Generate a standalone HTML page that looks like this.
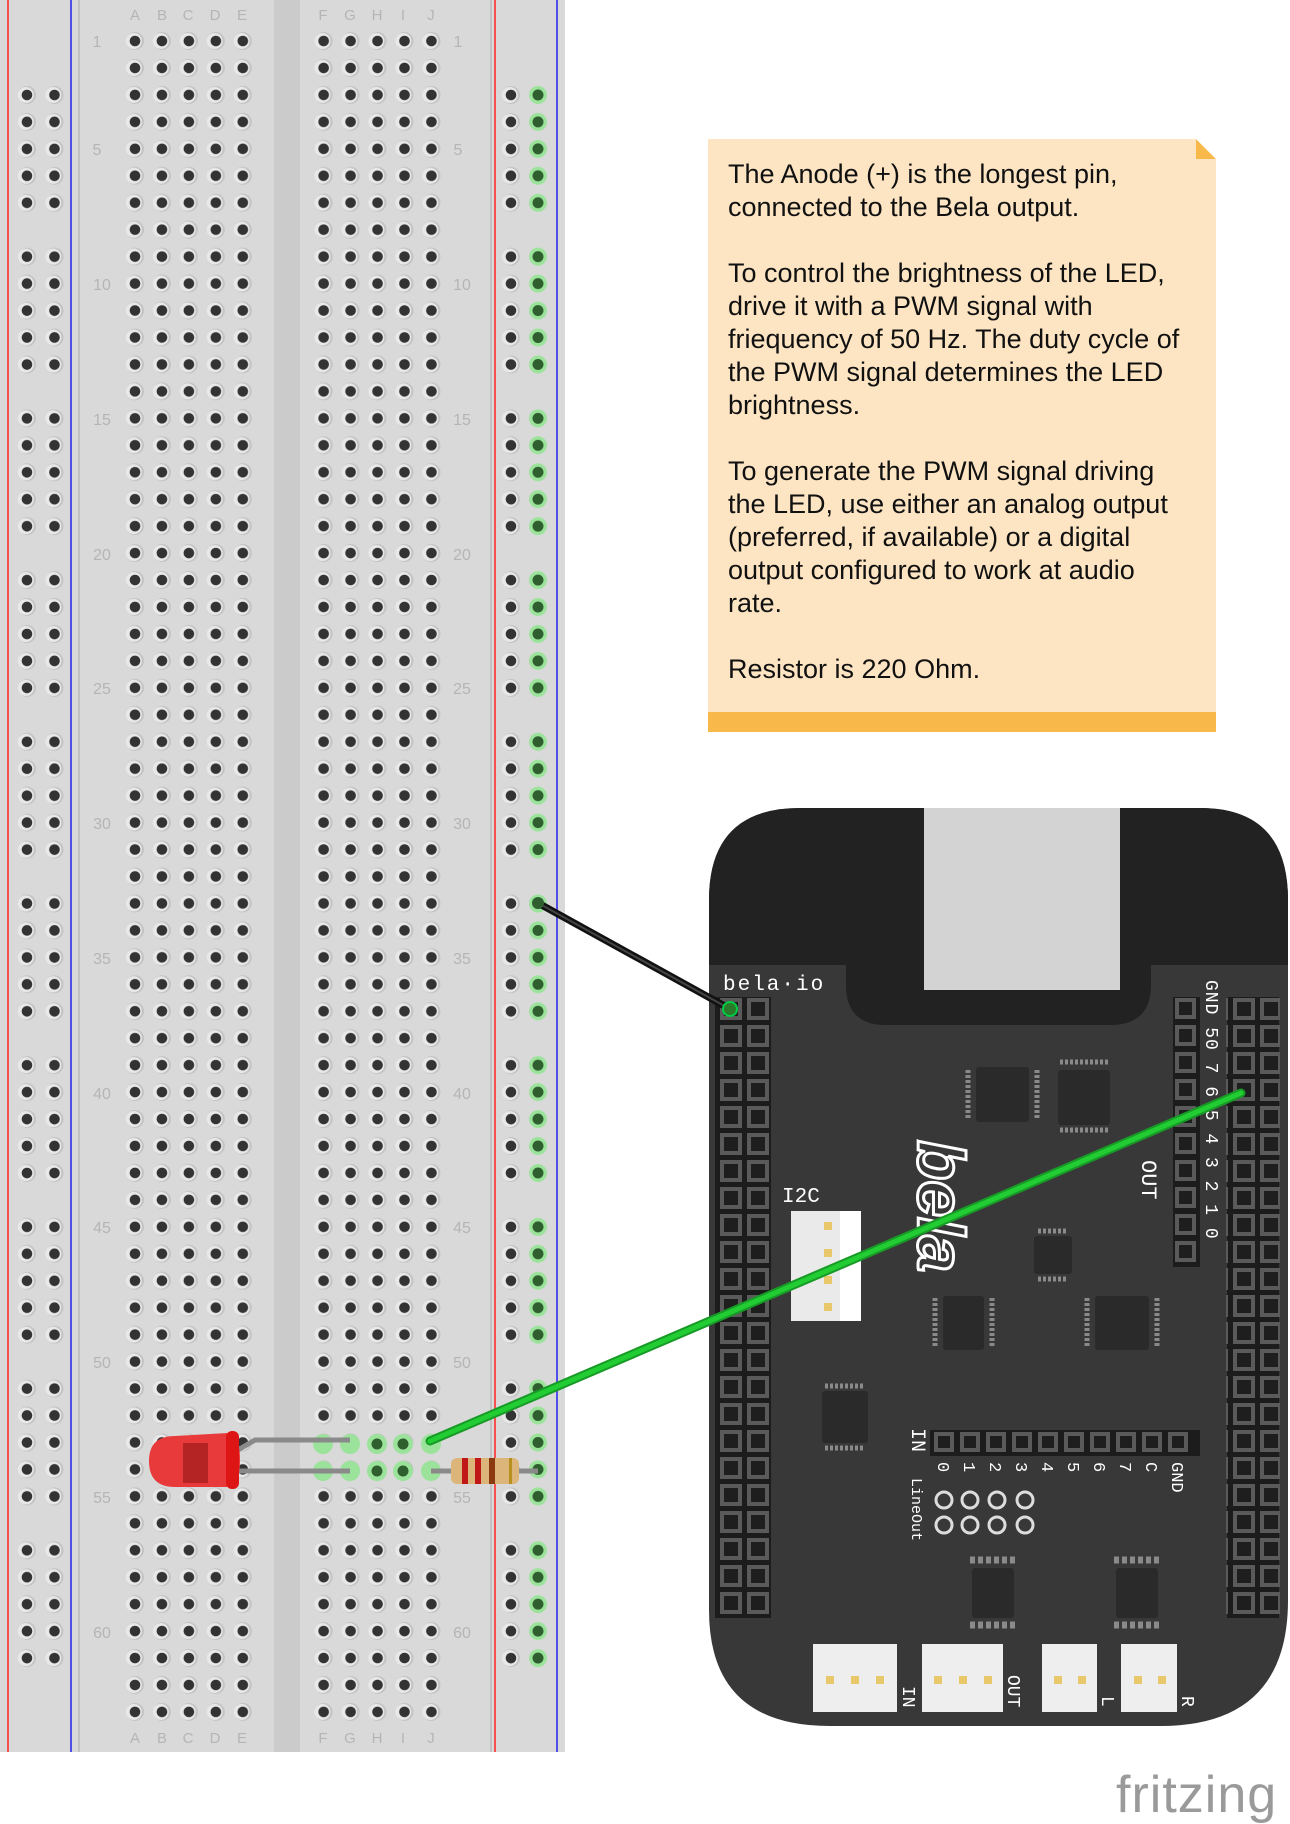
<!DOCTYPE html>
<html><head><meta charset="utf-8"><style>
html,body{margin:0;padding:0;background:#fff;}
body{width:1290px;height:1824px;position:relative;overflow:hidden;font-family:"Liberation Sans",sans-serif;}
svg{position:absolute;left:0;top:0}
.note{position:absolute;left:728px;top:158px;font-size:27px;line-height:33px;color:#111;}
</style></head><body>
<svg width="1290" height="1824" viewBox="0 0 1290 1824" xmlns="http://www.w3.org/2000/svg">
<defs>
<pattern id="h" x="121.525" y="27.525" width="26.95" height="26.95" patternUnits="userSpaceOnUse">
<circle cx="13.475" cy="13.475" r="9" fill="#c4c4c4"/><circle cx="12.3" cy="13.475" r="8" fill="#e8e8e8"/><circle cx="13.475" cy="13.475" r="5.3" fill="#333"/>
</pattern>
<g id="five">
<g fill="#c4c4c4"><circle cx="13.5" cy="13.475" r="9"/><circle cx="13.5" cy="40.4" r="9"/><circle cx="13.5" cy="67.4" r="9"/><circle cx="13.5" cy="94.3" r="9"/><circle cx="13.5" cy="121.3" r="9"/></g>
<g fill="#e8e8e8"><circle cx="12.3" cy="13.475" r="8"/><circle cx="12.3" cy="40.4" r="8"/><circle cx="12.3" cy="67.4" r="8"/><circle cx="12.3" cy="94.3" r="8"/><circle cx="12.3" cy="121.3" r="8"/></g>
<g fill="#333"><circle cx="13.5" cy="13.475" r="5.3"/><circle cx="13.5" cy="40.4" r="5.3"/><circle cx="13.5" cy="67.4" r="5.3"/><circle cx="13.5" cy="94.3" r="5.3"/><circle cx="13.5" cy="121.3" r="5.3"/></g>
</g>
<pattern id="r" x="13.5" y="81.5" width="27.5" height="161.7" patternUnits="userSpaceOnUse"><use href="#five"/></pattern>
<pattern id="r2" x="497.5" y="81.5" width="27.5" height="161.7" patternUnits="userSpaceOnUse"><use href="#five"/></pattern>
<pattern id="g" x="524.5" y="81.5" width="27.5" height="161.7" patternUnits="userSpaceOnUse">
<g fill="#9be39b"><circle cx="13.5" cy="13.475" r="9"/><circle cx="13.5" cy="40.4" r="9"/><circle cx="13.5" cy="67.4" r="9"/><circle cx="13.5" cy="94.3" r="9"/><circle cx="13.5" cy="121.3" r="9"/></g>
<g fill="#2f5f2f"><circle cx="13.5" cy="13.475" r="5.5"/><circle cx="13.5" cy="40.4" r="5.5"/><circle cx="13.5" cy="67.4" r="5.5"/><circle cx="13.5" cy="94.3" r="5.5"/><circle cx="13.5" cy="121.3" r="5.5"/></g>
</pattern>
<pattern id="hp" x="718" y="996" width="27" height="27" patternUnits="userSpaceOnUse">
<rect x="2" y="2" width="22" height="22" fill="#5a5a5a"/><rect x="6" y="6" width="14" height="14" fill="#1e1e1e"/>
</pattern>
</defs>
<rect x="0" y="0" width="565" height="1752" fill="#d9d9d9"/>
<rect x="274" y="0" width="26" height="1752" fill="#cbcbcb"/>
<line x1="79" y1="0" x2="79" y2="1752" stroke="#bbb" stroke-width="1.5"/>
<line x1="491" y1="0" x2="491" y2="1752" stroke="#bbb" stroke-width="1.5"/>
<line x1="8" y1="0" x2="8" y2="1752" stroke="#f22" stroke-width="1.5"/>
<line x1="71" y1="0" x2="71" y2="1752" stroke="#22e" stroke-width="1.5"/>
<line x1="495" y1="0" x2="495" y2="1752" stroke="#f22" stroke-width="1.5"/>
<line x1="557" y1="0" x2="557" y2="1752" stroke="#22e" stroke-width="1.5"/>
<rect x="121.5" y="27.5" width="134.75" height="1698" fill="url(#h)"/>
<rect x="309.5" y="27.5" width="134.75" height="1698" fill="url(#h)"/>
<rect x="13.5" y="81.5" width="55" height="1617" fill="url(#r)"/>
<rect x="497.5" y="81.5" width="27.5" height="1617" fill="url(#r2)"/>
<rect x="524.5" y="81.5" width="27.5" height="1617" fill="url(#g)"/>
<g fill="#9be39b"><circle cx="323" cy="1444" r="10"/><circle cx="350" cy="1444" r="10"/><circle cx="377" cy="1444" r="10"/><circle cx="403" cy="1444" r="10"/><circle cx="431" cy="1444" r="10"/>
<circle cx="323" cy="1471" r="10"/><circle cx="350" cy="1471" r="10"/><circle cx="377" cy="1471" r="10"/><circle cx="403" cy="1471" r="10"/><circle cx="431" cy="1471" r="10"/></g>
<g fill="#2f5f2f"><circle cx="377" cy="1444" r="5.5"/><circle cx="403" cy="1444" r="5.5"/><circle cx="377" cy="1471" r="5.5"/><circle cx="403" cy="1471" r="5.5"/></g>
<g font-family="Liberation Sans" font-size="15" fill="#b5b5b5" text-anchor="middle">
<text x="135" y="20">A</text><text x="162" y="20">B</text><text x="188" y="20">C</text><text x="215" y="20">D</text><text x="242" y="20">E</text>
<text x="323" y="20">F</text><text x="350" y="20">G</text><text x="377" y="20">H</text><text x="403" y="20">I</text><text x="431" y="20">J</text>
<text x="135" y="1743">A</text><text x="162" y="1743">B</text><text x="188" y="1743">C</text><text x="215" y="1743">D</text><text x="242" y="1743">E</text>
<text x="323" y="1743">F</text><text x="350" y="1743">G</text><text x="377" y="1743">H</text><text x="403" y="1743">I</text><text x="431" y="1743">J</text>
</g>
<g font-family="Liberation Sans" font-size="16" fill="#b5b5b5" text-anchor="middle">
<text x="97" y="47">1</text><text x="97" y="155">5</text><text x="102" y="290">10</text><text x="102" y="425">15</text><text x="102" y="560">20</text><text x="102" y="694">25</text><text x="102" y="829">30</text><text x="102" y="964">35</text><text x="102" y="1099">40</text><text x="102" y="1233">45</text><text x="102" y="1368">50</text><text x="102" y="1503">55</text><text x="102" y="1638">60</text>
<text x="458" y="47">1</text><text x="458" y="155">5</text><text x="462" y="290">10</text><text x="462" y="425">15</text><text x="462" y="560">20</text><text x="462" y="694">25</text><text x="462" y="829">30</text><text x="462" y="964">35</text><text x="462" y="1099">40</text><text x="462" y="1233">45</text><text x="462" y="1368">50</text><text x="462" y="1503">55</text><text x="462" y="1638">60</text>
</g>
<rect x="708" y="139" width="508" height="593" fill="#fde5c3"/>
<rect x="708" y="712" width="508" height="20" fill="#f8b84a"/>
<polygon points="1196,139 1216,159 1196,159" fill="#f8b84a"/>
<polygon points="1196,139 1216,139 1216,159" fill="#fff"/>
<path d="M709,900 Q709,808 800,808 L1200,808 Q1288,808 1288,900 L1288,1600 Q1288,1726 1160,1726 L830,1726 Q709,1726 709,1610 Z" fill="#383838"/>
<path d="M709,900 Q709,808 800,808 L1200,808 Q1288,808 1288,900 L1288,965 L1151,965 L1151,985 Q1151,1025 1110,1025 L886,1025 Q846,1025 846,985 L846,965 L709,965 Z" fill="#222"/>
<rect x="924" y="808" width="196" height="182" fill="#d3d3d3"/>
<text x="723" y="990" font-family="Liberation Mono" font-size="21" fill="#fff" letter-spacing="2">bela·io</text>
<rect x="715" y="997" width="56" height="621" fill="#1c1c1c"/>
<rect x="718" y="996" width="54" height="621" fill="url(#hp)"/>
<rect x="1227" y="997" width="52" height="621" fill="#1c1c1c"/>
<rect x="1226" y="996" width="54" height="621" fill="url(#hp)"/>
<rect x="1173" y="997" width="27" height="270" fill="#1c1c1c"/>
<g fill="#5a5a5a"><rect x="1175" y="998" width="21" height="21"/><rect x="1175" y="1025" width="21" height="21"/><rect x="1175" y="1052" width="21" height="21"/><rect x="1175" y="1079" width="21" height="21"/><rect x="1175" y="1106" width="21" height="21"/><rect x="1175" y="1133" width="21" height="21"/><rect x="1175" y="1160" width="21" height="21"/><rect x="1175" y="1187" width="21" height="21"/><rect x="1175" y="1214" width="21" height="21"/><rect x="1175" y="1241" width="21" height="21"/></g>
<g fill="#1e1e1e"><rect x="1179" y="1002" width="13" height="13"/><rect x="1179" y="1029" width="13" height="13"/><rect x="1179" y="1056" width="13" height="13"/><rect x="1179" y="1083" width="13" height="13"/><rect x="1179" y="1110" width="13" height="13"/><rect x="1179" y="1137" width="13" height="13"/><rect x="1179" y="1164" width="13" height="13"/><rect x="1179" y="1191" width="13" height="13"/><rect x="1179" y="1218" width="13" height="13"/><rect x="1179" y="1245" width="13" height="13"/></g>
<text transform="translate(1206,980) rotate(90)" font-family="Liberation Mono" font-size="18" fill="#fff" letter-spacing="1">GND 50 7 6 5 4 3 2 1 0</text>
<text transform="translate(1142,1160) rotate(90)" font-family="Liberation Mono" font-size="22" fill="#fff">OUT</text>
<text x="782" y="1202" font-family="Liberation Mono" font-size="21" fill="#fff">I2C</text>
<rect x="791" y="1211" width="70" height="110" fill="#eaeaea"/><rect x="840" y="1211" width="21" height="110" fill="#fff"/>
<g fill="#e8c86a"><rect x="824" y="1222" width="8" height="8"/><rect x="824" y="1249" width="8" height="8"/><rect x="824" y="1276" width="8" height="8"/><rect x="824" y="1303" width="8" height="8"/></g>
<text transform="translate(918,1140) rotate(90)" font-family="Liberation Sans" font-weight="bold" font-style="italic" font-size="66" fill="none" stroke="#fff" stroke-width="3">bela</text>
<g fill="#2a2a2a">
<rect x="976" y="1067" width="53" height="55" rx="3"/><rect x="1058" y="1070" width="52" height="55" rx="3"/>
<rect x="1034" y="1236" width="38" height="38" rx="3"/><rect x="943" y="1296" width="41" height="54" rx="3"/><rect x="1095" y="1296" width="54" height="54" rx="3"/>
<rect x="822" y="1391" width="46" height="52" rx="3"/><rect x="972" y="1568" width="42" height="50" rx="3"/><rect x="1116" y="1568" width="42" height="50" rx="3"/>
</g>
<g stroke="#8a8a8a" stroke-width="5" stroke-dasharray="3 2">
<line x1="968" y1="1070" x2="968" y2="1120"/><line x1="1037" y1="1070" x2="1037" y2="1120"/>
<line x1="1060" y1="1062" x2="1108" y2="1062"/><line x1="1060" y1="1130" x2="1108" y2="1130"/>
<line x1="935" y1="1298" x2="935" y2="1348"/><line x1="992" y1="1298" x2="992" y2="1348"/>
<line x1="1087" y1="1298" x2="1087" y2="1348"/><line x1="1157" y1="1298" x2="1157" y2="1348"/>
<line x1="825" y1="1386" x2="865" y2="1386"/><line x1="825" y1="1448" x2="865" y2="1448"/>
<line x1="1038" y1="1231" x2="1068" y2="1231"/><line x1="1038" y1="1279" x2="1068" y2="1279"/>
</g>
<g stroke="#8a8a8a" stroke-width="7" stroke-dasharray="5 3"><line x1="970" y1="1560" x2="1016" y2="1560"/><line x1="970" y1="1625" x2="1016" y2="1625"/><line x1="1114" y1="1560" x2="1160" y2="1560"/><line x1="1114" y1="1625" x2="1160" y2="1625"/></g>
<rect x="930" y="1430" width="270" height="26" fill="#1c1c1c"/>
<g fill="#5a5a5a"><rect x="934" y="1432" width="20" height="20"/><rect x="960" y="1432" width="20" height="20"/><rect x="986" y="1432" width="20" height="20"/><rect x="1012" y="1432" width="20" height="20"/><rect x="1038" y="1432" width="20" height="20"/><rect x="1064" y="1432" width="20" height="20"/><rect x="1090" y="1432" width="20" height="20"/><rect x="1116" y="1432" width="20" height="20"/><rect x="1142" y="1432" width="20" height="20"/><rect x="1168" y="1432" width="20" height="20"/></g>
<g fill="#1e1e1e"><rect x="938" y="1436" width="12" height="12"/><rect x="964" y="1436" width="12" height="12"/><rect x="990" y="1436" width="12" height="12"/><rect x="1016" y="1436" width="12" height="12"/><rect x="1042" y="1436" width="12" height="12"/><rect x="1068" y="1436" width="12" height="12"/><rect x="1094" y="1436" width="12" height="12"/><rect x="1120" y="1436" width="12" height="12"/><rect x="1146" y="1436" width="12" height="12"/><rect x="1172" y="1436" width="12" height="12"/></g>
<text transform="translate(912,1428) rotate(90)" font-family="Liberation Mono" font-size="20" fill="#fff">IN</text>
<g font-family="Liberation Mono" font-size="17" fill="#fff">
<text transform="translate(938,1462) rotate(90)">0</text><text transform="translate(964,1462) rotate(90)">1</text><text transform="translate(990,1462) rotate(90)">2</text><text transform="translate(1016,1462) rotate(90)">3</text>
<text transform="translate(1042,1462) rotate(90)">4</text><text transform="translate(1068,1462) rotate(90)">5</text><text transform="translate(1094,1462) rotate(90)">6</text><text transform="translate(1120,1462) rotate(90)">7</text><text transform="translate(1146,1462) rotate(90)">C</text><text transform="translate(1172,1462) rotate(90)">GND</text>
</g>
<text transform="translate(912,1478) rotate(90)" font-family="Liberation Mono" font-size="15" fill="#fff">LineOut</text>
<g fill="none" stroke="#ddd" stroke-width="3"><circle cx="944" cy="1500" r="8"/><circle cx="970" cy="1500" r="8"/><circle cx="997" cy="1500" r="8"/><circle cx="1025" cy="1500" r="8"/><circle cx="944" cy="1525" r="8"/><circle cx="970" cy="1525" r="8"/><circle cx="997" cy="1525" r="8"/><circle cx="1025" cy="1525" r="8"/></g>
<g fill="#eee"><rect x="813" y="1644" width="84" height="68"/><rect x="922" y="1644" width="81" height="68"/><rect x="1042" y="1644" width="55" height="68"/><rect x="1121" y="1644" width="56" height="68"/></g>
<g fill="#e8c86a"><rect x="826" y="1676" width="8" height="8"/><rect x="851" y="1676" width="8" height="8"/><rect x="876" y="1676" width="8" height="8"/><rect x="934" y="1676" width="8" height="8"/><rect x="959" y="1676" width="8" height="8"/><rect x="984" y="1676" width="8" height="8"/><rect x="1054" y="1676" width="8" height="8"/><rect x="1078" y="1676" width="8" height="8"/><rect x="1134" y="1676" width="8" height="8"/><rect x="1158" y="1676" width="8" height="8"/></g>
<g font-family="Liberation Mono" font-size="18" fill="#fff"><text transform="translate(903,1686) rotate(90)">IN</text><text transform="translate(1008,1675) rotate(90)">OUT</text><text transform="translate(1102,1696) rotate(90)">L</text><text transform="translate(1182,1696) rotate(90)">R</text></g>
<line x1="538" y1="903" x2="730" y2="1009" stroke="#111" stroke-width="7" stroke-linecap="round"/>
<line x1="538" y1="903" x2="730" y2="1009" stroke="#444" stroke-width="2"/>
<circle cx="730" cy="1009" r="7" fill="#2a7a2a" stroke="#0c4" stroke-width="2"/>
<circle cx="538" cy="903" r="6" fill="#2f5f2f"/>
<line x1="430" y1="1441" x2="1241" y2="1093" stroke="#179a26" stroke-width="9" stroke-linecap="round"/>
<line x1="430" y1="1441" x2="1241" y2="1093" stroke="#22cc33" stroke-width="5" stroke-linecap="round"/>
<path d="M238,1450 L255,1440 L350,1440" fill="none" stroke="#8a8a8a" stroke-width="5"/>
<path d="M238,1471 L350,1471" fill="none" stroke="#8a8a8a" stroke-width="5"/>
<path d="M175,1436 L228,1433 Q240,1433 240,1460 Q240,1487 228,1487 L175,1487 Q149,1487 149,1461 Q149,1436 175,1436Z" fill="#e83a3a"/>
<rect x="226" y="1431" width="13" height="58" rx="6" fill="#dd1515"/>
<rect x="183" y="1443" width="25" height="40" fill="#b52424"/>
<line x1="431" y1="1471" x2="538" y2="1471" stroke="#8a8a8a" stroke-width="5"/>
<rect x="451" y="1458" width="68" height="26" rx="6" fill="#dcb57a"/>
<rect x="462" y="1458" width="6" height="26" fill="#c01818"/><rect x="475" y="1458" width="6" height="26" fill="#c01818"/><rect x="489" y="1458" width="6" height="26" fill="#8b3a10"/><rect x="509" y="1458" width="3" height="26" fill="#b89020"/>
<text x="1116" y="1812" font-family="Liberation Sans" font-size="52" fill="#9a9a9a" letter-spacing="1">fritzing</text>
</svg>
<div class="note">The Anode (+) is the longest pin,<br>connected to the Bela output.<br><br>To control the brightness of the LED,<br>drive it with a PWM signal with<br>friequency of 50 Hz. The duty cycle of<br>the PWM signal determines the LED<br>brightness.<br><br>To generate the PWM signal driving<br>the LED, use either an analog output<br>(preferred, if available) or a digital<br>output configured to work at audio<br>rate.<br><br>Resistor is 220 Ohm.</div>
</body></html>
